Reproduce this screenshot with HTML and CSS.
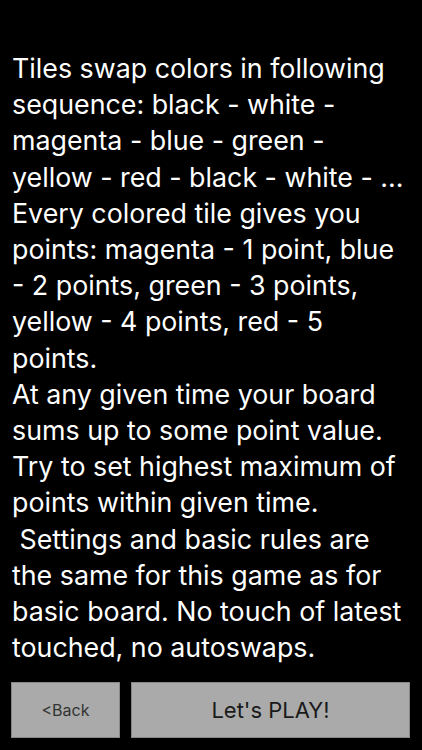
FILE: index.html
```html
<!DOCTYPE html>
<html lang="en">
<head>
    <meta charset="UTF-8">
    <meta name="viewport" content="width=device-width, initial-scale=1.0">
    <title>Rules</title>
    <link rel="stylesheet" href="styles.css">
</head>
<body>
    <div class="screen">
        <p class="rules">Tiles swap colors in following<br>
            sequence: black - white -<br>
            magenta - blue - green -<br>
            yellow - red - black - white - ...<br>
            Every colored tile gives you<br>
            points: magenta - 1 point, blue<br>
            - 2 points, green - 3 points,<br>
            yellow - 4 points, red - 5<br>
            points.<br>
            At any given time your board<br>
            sums up to some point value.<br>
            Try to set highest maximum of<br>
            points within given time.<br>
            &nbsp;Settings and basic rules are<br>
            the same for this game as for<br>
            basic board. No touch of latest<br>
            touched, no autoswaps.</p>

        <div class="buttons">
            <button class="btn back">&lt;Back</button>
            <button class="btn play">Let's PLAY!</button>
        </div>
    </div>
</body>
</html>
```

FILE: styles.css
```css
html, body {
    margin: 0;
    background-color: #000;
}

.screen {
    height: 750px;
    display: flex;
    flex-direction: column;
    font-family: Inter, "Noto Sans", sans-serif;
}

.rules {
    margin: 0;
    padding: 50px 0 0 12px;
    color: #fff;
    font-size: 26.8px;
    line-height: 36.2px;
    white-space: nowrap;
}

.buttons {
    margin-top: auto;
    display: flex;
    gap: 11px;
    padding: 0 12px 12px 11px;
}

.btn {
    height: 56px;
    background-color: #aaa;
    border: 1px solid #888;
    border-radius: 0;
    font-family: Inter, "Noto Sans", sans-serif;
    padding: 0;
}

.back {
    width: 109px;
    font-size: 16px;
    color: #333;
}

.play {
    flex: 1;
    font-size: 22px;
    color: #1a1a1a;
}
```
